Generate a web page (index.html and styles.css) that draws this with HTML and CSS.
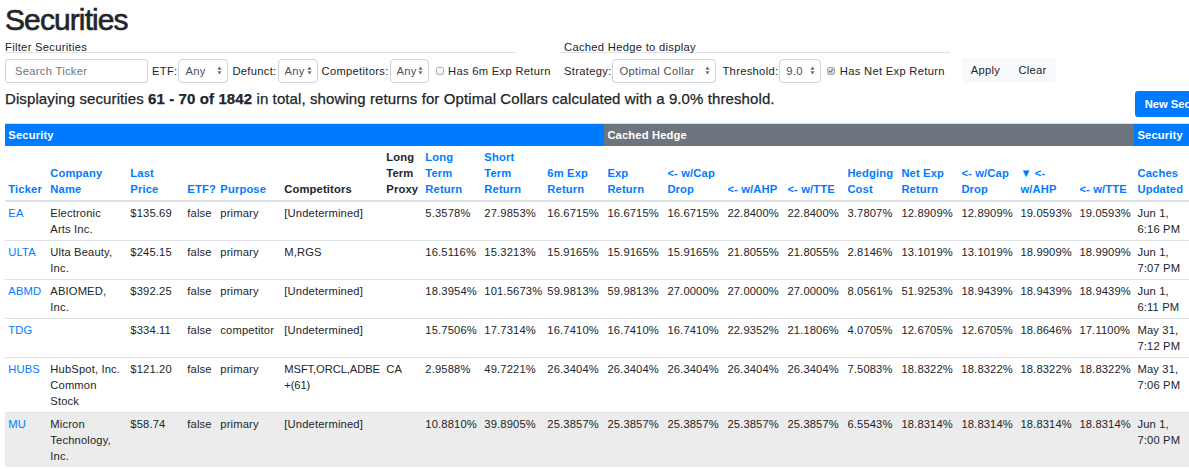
FILE: index.html
```html
<!DOCTYPE html>
<html lang="en">
<head>
<meta charset="utf-8">
<title>Securities</title>
<link rel="stylesheet" href="styles.css">
</head>
<body>
<div class="page">
  <h1 class="title">Securities</h1>

  <form class="filters">
    <div class="group group-filter" role="group">
      <div class="legend">Filter Securities</div>
      <div class="controls">
        <input class="input ticker" type="text" placeholder="Search Ticker">
        <label class="lbl">ETF:</label>
        <div class="sel sel-etf"><select><option>Any</option></select><svg class="arrows" width="5" height="9" viewBox="0 0 5 9"><path d="M0.4 3.7 2.5 0.6 4.6 3.7Z M0.4 5.3 2.5 8.4 4.6 5.3Z"/></svg></div>
        <label class="lbl">Defunct:</label>
        <div class="sel sel-def"><select><option>Any</option></select><svg class="arrows" width="5" height="9" viewBox="0 0 5 9"><path d="M0.4 3.7 2.5 0.6 4.6 3.7Z M0.4 5.3 2.5 8.4 4.6 5.3Z"/></svg></div>
        <label class="lbl">Competitors:</label>
        <div class="sel sel-comp"><select><option>Any</option></select><svg class="arrows" width="5" height="9" viewBox="0 0 5 9"><path d="M0.4 3.7 2.5 0.6 4.6 3.7Z M0.4 5.3 2.5 8.4 4.6 5.3Z"/></svg></div>
        <label class="check check-first"><span class="cb"></span><span class="check-text">Has 6m Exp Return</span></label>
      </div>
    </div>

    <div class="group group-hedge" role="group">
      <div class="legend">Cached Hedge to display</div>
      <div class="controls">
        <label class="lbl lbl-first">Strategy:</label>
        <div class="sel sel-strat"><select><option>Optimal Collar</option></select><svg class="arrows" width="5" height="9" viewBox="0 0 5 9"><path d="M0.4 3.7 2.5 0.6 4.6 3.7Z M0.4 5.3 2.5 8.4 4.6 5.3Z"/></svg></div>
        <label class="lbl lbl-thr">Threshold:</label>
        <div class="sel sel-thr"><select><option>9.0</option></select><svg class="arrows" width="5" height="9" viewBox="0 0 5 9"><path d="M0.4 3.7 2.5 0.6 4.6 3.7Z M0.4 5.3 2.5 8.4 4.6 5.3Z"/></svg></div>
        <label class="check check-second"><span class="cb cb-on"><svg width="8" height="8" viewBox="0 0 8 8"><path d="M1.7 4.1 3.2 5.7 6.3 2.1" fill="none" stroke="#3a3a3a" stroke-width="1.3" stroke-linecap="round" stroke-linejoin="round"/></svg></span><span class="check-text">Has Net Exp Return</span></label>
      </div>
    </div>

    <div class="btn-group">
      <button type="button" class="btn">Apply</button>
      <button type="button" class="btn">Clear</button>
    </div>
  </form>

  <div class="status">
    <h5 class="summary">Displaying securities <strong>61 - 70</strong> <strong>of</strong> <strong>1842</strong> in total, showing returns for Optimal Collars calculated with a 9.0% threshold.</h5>
    <button type="button" class="new-btn">New Security</button>
  </div>

  <table class="grid">
    <colgroup>
      <col class="w42"><col class="w80"><col class="w57"><col class="w33"><col class="w64"><col class="w102"><col class="w39"><col class="w59"><col class="w63"><col class="w60">
      <col class="w60"><col class="w60"><col class="w60"><col class="w60"><col class="w54"><col class="w60"><col class="w59"><col class="w59"><col class="w58">
      <col class="w56"><col class="w35">
    </colgroup>
    <thead>
      <tr>
        <th colspan="10" class="band band-sec">Security</th>
        <th colspan="9" class="band band-hedge">Cached Hedge</th>
        <th colspan="2" class="band band-sec">Security</th>
      </tr>
      <tr class="heads">
        <th><a href="#">Ticker</a></th>
        <th><a href="#">Company Name</a></th>
        <th><a href="#">Last Price</a></th>
        <th><a href="#">ETF?</a></th>
        <th><a href="#">Purpose</a></th>
        <th>Competitors</th>
        <th>Long Term Proxy</th>
        <th><a href="#">Long Term Return</a></th>
        <th><a href="#">Short Term Return</a></th>
        <th><a href="#">6m Exp Return</a></th>
        <th><a href="#">Exp Return</a></th>
        <th><a href="#">&lt;- w/Cap Drop</a></th>
        <th><a href="#">&lt;- w/AHP</a></th>
        <th><a href="#">&lt;- w/TTE</a></th>
        <th><a href="#">Hedging Cost</a></th>
        <th><a href="#">Net Exp Return</a></th>
        <th><a href="#">&lt;- w/Cap Drop</a></th>
        <th><a href="#">&#9660; &lt;- w/AHP</a></th>
        <th><a href="#">&lt;- w/TTE</a></th>
        <th><a href="#">Caches Updated</a></th>
        <th></th>
      </tr>
    </thead>
    <tbody>
      <tr>
        <td><a href="#">EA</a></td><td class="co">Electronic Arts Inc.</td><td>$135.69</td><td>false</td><td>primary</td><td>[Undetermined]</td><td></td>
        <td>5.3578%</td><td>27.9853%</td><td>16.6715%</td><td>16.6715%</td><td>16.6715%</td><td>22.8400%</td><td>22.8400%</td><td>3.7807%</td><td>12.8909%</td><td>12.8909%</td><td>19.0593%</td><td>19.0593%</td><td>Jun 1, 6:16 PM</td><td></td>
      </tr>
      <tr>
        <td><a href="#">ULTA</a></td><td class="co">Ulta Beauty, Inc.</td><td>$245.15</td><td>false</td><td>primary</td><td>M,RGS</td><td></td>
        <td>16.5116%</td><td>15.3213%</td><td>15.9165%</td><td>15.9165%</td><td>15.9165%</td><td>21.8055%</td><td>21.8055%</td><td>2.8146%</td><td>13.1019%</td><td>13.1019%</td><td>18.9909%</td><td>18.9909%</td><td>Jun 1, 7:07 PM</td><td></td>
      </tr>
      <tr>
        <td><a href="#">ABMD</a></td><td class="co">ABIOMED, Inc.</td><td>$392.25</td><td>false</td><td>primary</td><td>[Undetermined]</td><td></td>
        <td>18.3954%</td><td>101.5673%</td><td>59.9813%</td><td>59.9813%</td><td>27.0000%</td><td>27.0000%</td><td>27.0000%</td><td>8.0561%</td><td>51.9253%</td><td>18.9439%</td><td>18.9439%</td><td>18.9439%</td><td>Jun 1, 6:11 PM</td><td></td>
      </tr>
      <tr>
        <td><a href="#">TDG</a></td><td class="co"></td><td>$334.11</td><td>false</td><td>competitor</td><td>[Undetermined]</td><td></td>
        <td>15.7506%</td><td>17.7314%</td><td>16.7410%</td><td>16.7410%</td><td>16.7410%</td><td>22.9352%</td><td>21.1806%</td><td>4.0705%</td><td>12.6705%</td><td>12.6705%</td><td>18.8646%</td><td>17.1100%</td><td>May 31, 7:12 PM</td><td></td>
      </tr>
      <tr>
        <td><a href="#">HUBS</a></td><td class="co">HubSpot, Inc. Common Stock</td><td>$121.20</td><td>false</td><td>primary</td><td class="tight">MSFT,ORCL,ADBE +(61)</td><td>CA</td>
        <td>2.9588%</td><td>49.7221%</td><td>26.3404%</td><td>26.3404%</td><td>26.3404%</td><td>26.3404%</td><td>26.3404%</td><td>7.5083%</td><td>18.8322%</td><td>18.8322%</td><td>18.8322%</td><td>18.8322%</td><td>May 31, 7:06 PM</td><td></td>
      </tr>
      <tr class="hover">
        <td><a href="#">MU</a></td><td class="co">Micron Technology, Inc.</td><td>$58.74</td><td>false</td><td>primary</td><td>[Undetermined]</td><td></td>
        <td>10.8810%</td><td>39.8905%</td><td>25.3857%</td><td>25.3857%</td><td>25.3857%</td><td>25.3857%</td><td>25.3857%</td><td>6.5543%</td><td>18.8314%</td><td>18.8314%</td><td>18.8314%</td><td>18.8314%</td><td>Jun 1, 7:00 PM</td><td></td>
      </tr>
    </tbody>
  </table>
</div>
</body>
</html>
```

FILE: styles.css
```css
* { box-sizing: border-box; }

html { overflow: hidden; }

body {
  margin: 0;
  font-family: "Liberation Sans", Arial, Helvetica, sans-serif;
  font-size: 11.2px;
  line-height: 16px;
  color: #212529;
  background: #fff;
}

.page {
  width: 1225px;
  padding: 2px 0 0 5px;
}

.title {
  margin: 0;
  font-size: 30px;
  line-height: 36px;
  font-weight: 500;
  letter-spacing: -0.9px;
  -webkit-text-stroke: 0.6px #212529;
}

/* ---------- filters ---------- */
.filters {
  display: flex;
  align-items: flex-end;
  margin-top: 4.3px;
}

.group { flex: none; }
.group-filter { width: 511px; }
.group-hedge { width: 389px; margin-left: 45px; }

.legend {
  font-size: 11.2px;
  line-height: 10px;
  letter-spacing: 0.3px;
  border-bottom: 1px solid #dee2e6;
}
.group-hedge .legend { padding-left: 3px; }

.controls {
  display: flex;
  align-items: center;
  height: 24px;
  margin-top: 5.7px;
  white-space: nowrap;
  letter-spacing: 0.3px;
}
.group-hedge .controls { padding-left: 3px; }

.input {
  flex: none;
  width: 143px;
  height: 24px;
  border: 1px solid #ced4da;
  border-radius: 3px;
  padding: 0 9px;
  font: inherit;
  letter-spacing: 0.3px;
  color: #495057;
  background: #fff;
}
.input::placeholder { color: #6c757d; }

.lbl { flex: none; margin: 0 1px 0 4px; }
.lbl-first { margin-left: 0; }
.lbl-thr { margin-left: 6px; }

.sel {
  flex: none;
  display: flex;
  align-items: center;
  height: 24px;
  border: 1px solid #ced4da;
  border-radius: 4px;
  padding: 0 5px 0 6px;
  background: #fff;
}
.sel select {
  -webkit-appearance: none;
  appearance: none;
  flex: 1;
  min-width: 0;
  height: 22px;
  border: 0;
  padding: 0;
  margin: 0;
  background: transparent;
  font: inherit;
  letter-spacing: 0.3px;
  color: #495057;
  outline: none;
}
.arrows { flex: none; fill: #6b6f73; }

.sel-etf { width: 50px; }
.sel-def { width: 40px; }
.sel-comp { width: 39px; }
.sel-strat { width: 104px; }
.sel-thr { width: 42px; }

.check { display: flex; align-items: center; flex: none; }
.check-first { margin-left: 7px; }
.check-second { margin-left: 6px; }
.cb {
  display: flex;
  align-items: center;
  justify-content: center;
  width: 8px;
  height: 8px;
  border: 1px solid #b3b3b3;
  border-radius: 2px;
  background: linear-gradient(#ffffff, #ececec);
}
.cb-on { background: linear-gradient(#e4e4e4, #d2d2d2); border-color: #a8a8a8; }
.check-text { margin-left: 4.5px; }

.btn-group {
  display: flex;
  margin-left: 12px;
  height: 25px;
}
.btn {
  width: 47px;
  height: 25px;
  border: 0;
  padding: 0;
  background: #f8f9fa;
  font: inherit;
  letter-spacing: 0.3px;
  color: #212529;
}
.btn:first-child { border-radius: 3px 0 0 3px; }
.btn:last-child { border-radius: 0 3px 3px 0; }

/* ---------- status line ---------- */
.status {
  display: flex;
  justify-content: space-between;
  align-items: flex-start;
  margin-top: 7.3px;
}
.summary {
  margin: 0;
  font-size: 15px;
  line-height: 18px;
  font-weight: 500;
  letter-spacing: 0.1px;
  -webkit-text-stroke: 0.25px #212529;
}
.summary strong { font-weight: 700; }

.new-btn {
  margin-top: 0.7px;
  height: 25.7px;
  padding: 0 10px;
  border: 0;
  border-radius: 3px;
  background: #007bff;
  color: #fff;
  font: 700 11.2px "Liberation Sans", Arial, sans-serif;
}

/* ---------- table ---------- */
.grid {
  margin-top: 6.3px;
  width: 1220px;
  table-layout: fixed;
  border-collapse: separate;
  border-spacing: 0;
  font-size: 11.2px;
  line-height: 16px;
  letter-spacing: 0.15px;
}

.w33 { width: 33px; } .w35 { width: 35px; } .w39 { width: 39px; }
.w42 { width: 42px; } .w54 { width: 54px; } .w56 { width: 56px; }
.w57 { width: 57px; } .w58 { width: 58px; } .w59 { width: 59px; }
.w60 { width: 60px; } .w63 { width: 63px; } .w64 { width: 64px; }
.w80 { width: 80px; } .w102 { width: 102px; }

.grid th,
.grid td {
  padding: 3px 3.3px;
  text-align: left;
}
.grid th { font-weight: 700; vertical-align: bottom; }
.grid td { vertical-align: top; border-top: 1px solid #dee2e6; }
.grid tbody tr:first-child td { border-top: 0; }

.band {
  border-top: 1px solid #dee2e6;
  color: #fff;
}
.band-sec { background: #007bff; }
.band-hedge { background: #6c757d; }

.heads th { border-bottom: 2px solid #dee2e6; }

.grid a { color: #007bff; text-decoration: none; }

.grid td.co { padding-right: 5px; }
.grid td.tight { letter-spacing: -0.1px; }

.hover td { background: #ececec; }
```
